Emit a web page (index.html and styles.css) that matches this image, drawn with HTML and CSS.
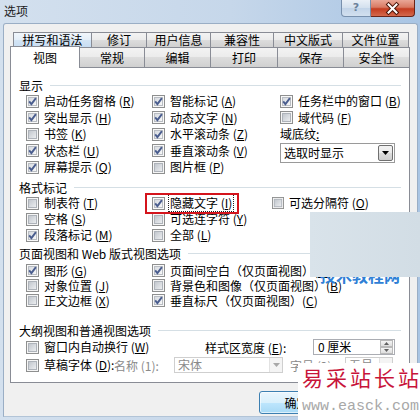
FILE: index.html
```html
<!DOCTYPE html>
<html lang="zh-CN">
<head>
<meta charset="utf-8">
<title>选项</title>
<link rel="stylesheet" href="styles.css">
</head>
<body>
<svg class="defs" width="0" height="0" aria-hidden="true">
  <defs>
    <linearGradient id="cbfill0" x1="0" y1="0" x2="1" y2="1"><stop offset="0" stop-color="#bfc4cb"/><stop offset="1" stop-color="#eef0f2"/></linearGradient>
    <linearGradient id="cbfill1" x1="0" y1="0" x2="1" y2="1"><stop offset="0" stop-color="#d4d8de"/><stop offset="1" stop-color="#fafafa"/></linearGradient>
    <symbol id="cb0" viewBox="0 0 13 13"><rect x=".5" y=".5" width="12" height="12" fill="#f5f5f5" stroke="#8e8f8f"/><rect x="2.5" y="2.5" width="8" height="8" fill="url(#cbfill0)" stroke="#aeb3ba"/></symbol>
    <symbol id="cb1" viewBox="0 0 13 13"><rect x=".5" y=".5" width="12" height="12" fill="#f8f8f8" stroke="#8e8f8f"/><rect x="2.5" y="2.5" width="8" height="8" fill="url(#cbfill1)" stroke="#b9bdc3"/><path d="M3.2 6.4l2.2 2.7L9.9 3.2" fill="none" stroke="#4a5d8e" stroke-width="1.9"/></symbol>
  </defs>
</svg>
<div class="window">
  <div class="titlebar">
    <span class="title">选项</span>
    <div class="caps">
      <div class="cap help">?</div>
      <div class="cap close">
        <svg width="42" height="15" viewBox="0 0 42 15"><path d="M16.5 3.5l8 8M24.5 3.5l-8 8" stroke="#4a1509" stroke-width="4" stroke-linecap="square"/><path d="M16.5 3.5l8 8M24.5 3.5l-8 8" stroke="#ffffff" stroke-width="2" stroke-linecap="square"/></svg>
      </div>
    </div>
  </div>
  <div class="client">
    <div class="tabrow row1">
      <div class="tab t1 hot">拼写和语法</div>
      <div class="tab t2">修订</div>
      <div class="tab t3">用户信息</div>
      <div class="tab t4">兼容性</div>
      <div class="tab t5">中文版式</div>
      <div class="tab t6">文件位置</div>
    </div>
    <div class="tabrow row2">
      <div class="tab sel">视图</div>
      <div class="tab u2">常规</div>
      <div class="tab u3">编辑</div>
      <div class="tab u4">打印</div>
      <div class="tab u5">保存</div>
      <div class="tab u6">安全性</div>
    </div>
    <div class="pane">
      <section class="group g-show">
        <div class="ghead"><span>显示</span></div>
        <div class="grid show">
          <div class="item"><svg class="cb"><use href="#cb1"/></svg><span>启动任务窗格 (<u>R</u>)</span></div>
          <div class="item"><svg class="cb"><use href="#cb1"/></svg><span>智能标记 (<u>A</u>)</span></div>
          <div class="item"><svg class="cb"><use href="#cb1"/></svg><span>任务栏中的窗口 (<u>B</u>)</span></div>
          <div class="item"><svg class="cb"><use href="#cb1"/></svg><span>突出显示 (<u>H</u>)</span></div>
          <div class="item"><svg class="cb"><use href="#cb1"/></svg><span>动态文字 (<u>N</u>)</span></div>
          <div class="item"><svg class="cb"><use href="#cb0"/></svg><span>域代码 (<u>F</u>)</span></div>
          <div class="item"><svg class="cb"><use href="#cb0"/></svg><span>书签 (<u>K</u>)</span></div>
          <div class="item"><svg class="cb"><use href="#cb1"/></svg><span>水平滚动条 (<u>Z</u>)</span></div>
          <div class="item"><span>域底纹<u>:</u></span></div>
          <div class="item"><svg class="cb"><use href="#cb1"/></svg><span>状态栏 (<u>U</u>)</span></div>
          <div class="item"><svg class="cb"><use href="#cb1"/></svg><span>垂直滚动条 (<u>V</u>)</span></div>
          <div class="select">
            <span class="seltext">选取时显示</span>
            <span class="dropbtn"><svg width="7" height="4" viewBox="0 0 7 4"><path d="M0 0h7L3.5 4z" fill="#000"/></svg></span>
          </div>
          <div class="item"><svg class="cb"><use href="#cb1"/></svg><span>屏幕提示 (<u>Q</u>)</span></div>
          <div class="item"><svg class="cb"><use href="#cb0"/></svg><span>图片框 (<u>P</u>)</span></div>
        </div>
      </section>
      <section class="group g-fmt">
        <div class="ghead"><span>格式标记</span></div>
        <div class="grid fmt">
          <div class="item"><svg class="cb"><use href="#cb0"/></svg><span>制表符 (<u>T</u>)</span></div>
          <div class="item"><svg class="cb"><use href="#cb1"/></svg><span class="focus">隐藏文字 (<u>I</u>)</span></div>
          <div class="item"><svg class="cb small"><use href="#cb0"/></svg><span>可选分隔符 (<u>O</u>)</span></div>
          <div class="item"><svg class="cb"><use href="#cb0"/></svg><span>空格 (<u>S</u>)</span></div>
          <div class="item"><svg class="cb"><use href="#cb0"/></svg><span>可选连字符 (<u>Y</u>)</span></div>
          <div class="item"></div>
          <div class="item"><svg class="cb"><use href="#cb1"/></svg><span>段落标记 (<u>M</u>)</span></div>
          <div class="item"><svg class="cb"><use href="#cb0"/></svg><span>全部 (<u>L</u>)</span></div>
        </div>
      </section>
      <section class="group g-page">
        <div class="ghead"><span>页面视图和 Web 版式视图选项</span></div>
        <div class="grid page">
          <div class="item"><svg class="cb"><use href="#cb1"/></svg><span>图形 (<u>G</u>)</span></div>
          <div class="item"><svg class="cb"><use href="#cb1"/></svg><span>页面间空白（仅页面视图）(<u>W</u>)</span></div>
          <div class="item"><svg class="cb"><use href="#cb0"/></svg><span>对象位置 (<u>J</u>)</span></div>
          <div class="item"><svg class="cb"><use href="#cb0"/></svg><span>背景色和图像（仅页面视图）(<u>B</u>)</span></div>
          <div class="item"><svg class="cb"><use href="#cb0"/></svg><span>正文边框 (<u>X</u>)</span></div>
          <div class="item"><svg class="cb"><use href="#cb1"/></svg><span>垂直标尺（仅页面视图）(<u>C</u>)</span></div>
        </div>
      </section>
      <section class="group g-outline">
        <div class="ghead"><span>大纲视图和普通视图选项</span></div>
        <div class="orow">
          <div class="item wrapw"><svg class="cb"><use href="#cb0"/></svg><span>窗口内自动换行 (<u>W</u>)</span></div>
          <span class="stylelbl">样式区宽度 (<u>E</u>):</span>
          <div class="spin">
            <span class="spintext">0 厘米</span>
            <span class="spinbtns">
              <span class="sb"><svg width="5" height="3" viewBox="0 0 5 3"><path d="M0 3h5L2.5 0z" fill="#606060"/></svg></span>
              <span class="sb"><svg width="5" height="3" viewBox="0 0 5 3"><path d="M0 0h5L2.5 3z" fill="#606060"/></svg></span>
            </span>
          </div>
        </div>
        <div class="orow">
          <div class="item draftw"><svg class="cb"><use href="#cb0"/></svg><span>草稿字体 (<u>D</u>):</span></div>
          <span class="dis namelbl">名称 (1):</span>
          <div class="combo fontcombo"><span class="combotext">宋体</span><span class="cdrop"><svg width="7" height="4" viewBox="0 0 7 4"><path d="M0 0h7L3.5 4z" fill="#a8a8a8"/></svg></span></div>
          <span class="dis sizelbl">字号 (2):</span>
          <div class="combo sizecombo"><span class="combotext">五号</span><span class="cdrop"><svg width="7" height="4" viewBox="0 0 7 4"><path d="M0 0h7L3.5 4z" fill="#a8a8a8"/></svg></span></div>
        </div>
      </section>
    </div>
    <div class="footer">
      <button class="btn" type="button">确定</button>
    </div>
  </div>

  <div class="mark-red"></div>
  <div class="mark-bluetext">技术教程网</div>
  <div class="mark-box"></div>
  <div class="mark-logo">
    <div class="logo-cn">易采站长站</div>
    <div class="logo-url">www.easck.com</div>
  </div>
</div>
</body>
</html>
```

FILE: styles.css
```css
* { box-sizing: border-box; }
html, body { margin: 0; padding: 0; }
body {
  width: 420px;
  height: 420px;
  overflow: hidden;
  font-family: "Noto Sans CJK SC", "Noto Sans", sans-serif;
  font-size: 12px;
  color: #000;
  background: #c9d9ea;
}
.defs { display: block; width: 0; height: 0; overflow: hidden; }
u { text-decoration: underline; text-underline-offset: 1px; }

.window {
  position: relative;
  width: 420px;
  height: 420px;
  overflow: hidden;
  background: linear-gradient(90deg, #d3e0ee 0%, #c6d7ea 55%, #a9c5e4 100%);
}

/* title bar */
.titlebar {
  height: 23px;
  display: flex;
  justify-content: space-between;
  align-items: flex-start;
  padding: 0 5px 0 4px;
}
.title { line-height: 22px; font-size: 12px; color: #1b1b1b; }
.caps { display: flex; }
.cap { height: 17px; }
.help {
  width: 30px;
  border: 1px solid #7890ad;
  border-top: none;
  border-radius: 0 0 0 4px;
  background: linear-gradient(#eaf0f7, #d3e0ee 50%, #c2d4e8 50%, #d2e0ef);
  color: #6c819b;
  font-family: "DejaVu Sans", sans-serif;
  font-weight: bold;
  font-size: 11px;
  line-height: 15px;
  text-align: center;
}
.close {
  width: 44px;
  border: 1px solid #6a2418;
  border-top: none;
  border-left: none;
  border-radius: 0 0 4px 0;
  background: linear-gradient(#e9a797, #d97a63 45%, #c43c20 55%, #d4694d);
  display: flex;
  align-items: center;
  justify-content: center;
}

/* client area */
.client {
  margin: 0 2px 0 3px;
  height: 394px;
  background: #f0f0f0;
  border: 1px solid #9aaec5;
  border-bottom-color: #b2c4d7;
  border-radius: 3px 3px 0 0;
  padding-top: 8px;
}

.tabrow { display: flex; }
.tab {
  border: 1px solid #898c95;
  border-bottom: none;
  text-align: center;
  white-space: nowrap;
  background: linear-gradient(#f3f3f3, #ebebeb 50%, #dddddd 50%, #d0d0d0);
}
.row1 { margin-left: 9px; height: 15px; }
.row1 .tab { height: 15px; line-height: 13px; margin-right: -1px; }
.row1 .hot { background: linear-gradient(#f1f6fb, #e4eef8 50%, #d4e5f5 50%, #c8ddf2); }
.t1 { width: 79px; }
.t2 { width: 56px; }
.t3 { width: 65px; }
.t4 { width: 64px; }
.t5 { width: 70px; }
.t6 { width: 67px; }

.row2 { margin-left: 6px; height: 20px; }
.row2 .tab { height: 20px; line-height: 19px; margin-left: -1px; }
.row2 .sel {
  position: relative;
  z-index: 2;
  margin-left: 0;
  margin-top: -1px;
  width: 70px;
  height: 22px;
  line-height: 21px;
  background: #fff;
}
.u2 { width: 66px; }
.u3 { width: 67px; }
.u4 { width: 68px; }
.u5 { width: 67px; }
.u6 { width: 67px; }

/* tab pane */
.pane {
  margin-left: 6px;
  width: 400px;
  height: 316px;
  background: #fff;
  border: 1px solid #898c95;
  padding-top: 9px;
}
.ghead {
  display: flex;
  align-items: center;
  height: 16px;
  padding: 0 8px;
  white-space: nowrap;
}
.ghead::after {
  content: "";
  flex: 1;
  height: 1px;
  margin-left: 7px;
  background: #d5dfe5;
}

.grid { display: grid; margin-left: 15px; }
.show { grid-template-columns: 126px 128px 1fr; grid-auto-rows: 16.5px; }
.fmt { grid-template-columns: 126px 120px 1fr; grid-auto-rows: 16px; }
.page { grid-template-columns: 126px 1fr; grid-auto-rows: 15px; margin-top: 2px; }

.g-fmt { margin-top: 3.5px; }
.g-page { margin-top: 2px; }
.g-outline { margin-top: 14px; }

.item {
  display: flex;
  align-items: center;
  gap: 5px;
  white-space: nowrap;
  line-height: 14px;
}
.cb { width: 13px; height: 13px; flex: none; }
.cb.small { width: 12px; height: 12px; }
.focus { outline: 1px dotted #222; outline-offset: 1px; }

.select {
  grid-row: span 2;
  align-self: start;
  width: 115px;
  height: 20px;
  border: 1px solid #9a9a9a;
  background: #fff;
  display: flex;
  align-items: center;
  justify-content: space-between;
  padding: 0 1px 0 3px;
}
.seltext { line-height: 16px; }
.dropbtn {
  width: 15px;
  height: 16px;
  border: 1px solid #707070;
  border-radius: 2px;
  background: linear-gradient(#f2f2f2, #ebebeb 50%, #dddddd 50%, #cfcfcf);
  display: flex;
  align-items: center;
  justify-content: center;
}

/* outline section */
.orow {
  display: flex;
  align-items: center;
  height: 18px;
  margin-left: 15px;
  white-space: nowrap;
}
.wrapw { width: 179px; }
.stylelbl { width: 108px; }
.spin {
  width: 82px;
  height: 16px;
  border: 1px solid #abadb3;
  background: #fff;
  display: flex;
  align-items: center;
  padding-left: 4px;
}
.spintext { flex: 1; line-height: 14px; }
.spinbtns {
  width: 13px;
  height: 14px;
  display: flex;
  flex-direction: column;
  margin-right: 1px;
}
.sb {
  flex: 1;
  border: 1px solid #b9b9b9;
  background: linear-gradient(#f4f4f4, #dedede);
  display: flex;
  align-items: center;
  justify-content: center;
}
.draftw { width: 88px; }
.dis { color: #8a8a8a; }
.namelbl { width: 60px; }
.combo {
  height: 16px;
  border: 1px solid #cfcfcf;
  background: #fff;
  display: flex;
  align-items: center;
  padding-left: 3px;
  color: #8a8a8a;
}
.combotext { flex: 1; line-height: 14px; }
.cdrop {
  width: 13px;
  height: 14px;
  background: #f4f4f4;
  border-left: 1px solid #e2e2e2;
  display: flex;
  align-items: center;
  justify-content: center;
}
.fontcombo { width: 109px; }
.sizelbl { width: 55px; margin-left: 7px; }
.sizecombo { width: 48px; }

/* footer */
.footer { padding: 8px 0 0 255px; }
.btn {
  width: 75px;
  height: 23px;
  padding: 0;
  border: 1px solid #3c7fb1;
  border-radius: 3px;
  font: inherit;
  color: #000;
  background: linear-gradient(#eaf6fd, #d9f0fc 50%, #bee6fd 50%, #a7d9f5);
  box-shadow: inset 0 0 0 1px rgba(255,255,255,.6);
}

/* watermark overlays */
.mark-red {
  position: absolute;
  left: 145px;
  top: 193px;
  width: 94px;
  height: 21px;
  border: 2px solid #d4141c;
}
.mark-bluetext {
  position: absolute;
  left: 320px;
  top: 265px;
  font-size: 16px;
  font-weight: bold;
  line-height: 20px;
  color: #2f7fd6;
  white-space: nowrap;
}
.mark-box {
  position: absolute;
  left: 310px;
  top: 212px;
  width: 110px;
  height: 65px;
  background: linear-gradient(90deg, #d9e3ea, #d2dde5);
}
.mark-logo {
  position: absolute;
  left: 298px;
  top: 363px;
  width: 122px;
  height: 57px;
  background: #fff;
  padding-left: 4px;
}
.logo-cn {
  font-size: 21px;
  line-height: 26px;
  letter-spacing: 3px;
  color: #c8143a;
  white-space: nowrap;
  margin-top: 1px;
}
.logo-url {
  font-family: "Liberation Mono", monospace;
  font-size: 15px;
  line-height: 18px;
  color: #a8a8a8;
  white-space: nowrap;
  margin-top: 8px;
}
```
